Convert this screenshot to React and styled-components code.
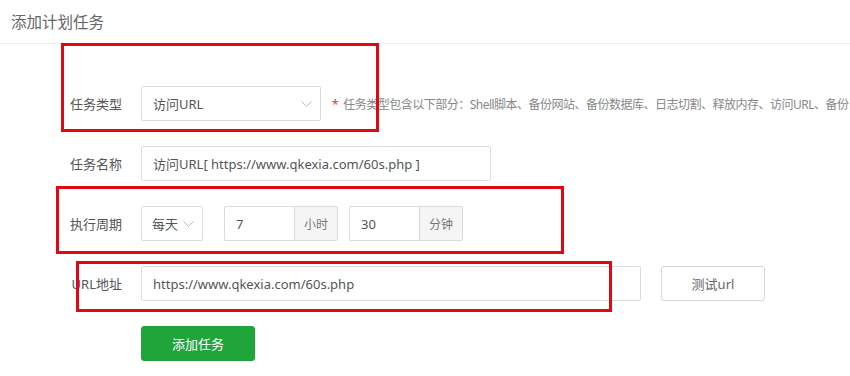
import React from "react";
import styled, { createGlobalStyle } from "styled-components";

const Global = createGlobalStyle`
  html, body { margin: 0; padding: 0; background: #fff; }
  body {
    width: 850px; height: 376px; overflow: hidden;
    font-family: "Noto Sans", "Noto Sans CJK SC", sans-serif;
    color: #555;
  }
`;

const Page = styled.div`
  position: relative;
  width: 850px;
  height: 376px;
  overflow: hidden;
`;

const TitleBar = styled.div`
  height: 43px;
  padding-left: 11px;
  display: flex;
  align-items: center;
  border-bottom: 1px solid #ececec;
  font-size: 15.5px;
  color: #666;
`;

const Form = styled.div`
  padding: 42px 0 0 0;
  display: flex;
  flex-direction: column;
  gap: 25px;
`;

const Row = styled.div`
  display: flex;
  align-items: center;
  height: 35px;
  white-space: nowrap;
`;

const Label = styled.div`
  width: 141px;
  padding-right: 19px;
  box-sizing: border-box;
  text-align: right;
  font-size: 13px;
  color: #555;
  flex-shrink: 0;
`;

const Box = styled.div`
  box-sizing: border-box;
  height: 35px;
  width: ${(p) => p.$w}px;
  border: 1px solid #dcdcdc;
  border-radius: 2px;
  display: flex;
  align-items: center;
  padding-left: ${(p) => p.$pl || 11}px;
  padding-right: 8px;
  font-size: 13px;
  color: #555;
  background: #fff;
  margin-left: ${(p) => p.$ml || 0}px;
  flex-shrink: 0;
`;

const BoxText = styled.span`
  flex: 1;
`;

const Group = styled.div`
  display: flex;
  height: 35px;
  margin-left: ${(p) => p.$ml || 0}px;
  flex-shrink: 0;
`;

const GroupInput = styled.div`
  box-sizing: border-box;
  width: 70px;
  height: 35px;
  border: 1px solid #dcdcdc;
  border-right: none;
  border-radius: 2px 0 0 2px;
  display: flex;
  align-items: center;
  padding-left: 11px;
  font-size: 13px;
  color: #555;
`;

const Addon = styled.div`
  box-sizing: border-box;
  width: 44px;
  height: 35px;
  border: 1px solid #dcdcdc;
  border-radius: 0 2px 2px 0;
  background: #f5f5f5;
  display: flex;
  align-items: center;
  justify-content: center;
  font-size: 12px;
  color: #777;
`;

const Hint = styled.div`
  margin-left: 11px;
  font-size: 12px;
  color: #888;
  white-space: nowrap;
  letter-spacing: -0.5px;
`;

const Star = styled.span`
  color: #e33;
  margin-right: 5px;
`;

const Button = styled.button`
  box-sizing: border-box;
  height: 35px;
  width: ${(p) => p.$w}px;
  margin-left: ${(p) => p.$ml || 0}px;
  border-radius: 3px;
  font-family: inherit;
  font-size: 13px;
  cursor: pointer;
  flex-shrink: 0;
  border: 1px solid ${(p) => (p.$primary ? "#20a53a" : "#d6d6d6")};
  background: ${(p) => (p.$primary ? "#20a53a" : "#fff")};
  color: ${(p) => (p.$primary ? "#fff" : "#666")};
`;

const Mark = styled.div`
  position: absolute;
  left: ${(p) => p.$x}px;
  top: ${(p) => p.$y}px;
  width: ${(p) => p.$w}px;
  height: ${(p) => p.$h}px;
  box-sizing: border-box;
  border: 3px solid #e30613;
  pointer-events: none;
`;

const Chevron = () => (
  <svg width="11" height="6" viewBox="0 0 11 6" fill="none">
    <path d="M0.5 0.5 L5.5 5.3 L10.5 0.5" stroke="#b8b8b8" strokeWidth="1" />
  </svg>
);

export default function App() {
  return (
    <Page>
      <Global />
      <TitleBar>添加计划任务</TitleBar>
      <Form>
        <Row>
          <Label>任务类型</Label>
          <Box $w={180}>
            <BoxText>访问URL</BoxText>
            <Chevron />
          </Box>
          <Hint>
            <Star>*</Star>
            任务类型包含以下部分：Shell脚本、备份网站、备份数据库、日志切割、释放内存、访问URL、备份目录
          </Hint>
        </Row>
        <Row>
          <Label>任务名称</Label>
          <Box $w={350}>访问URL[ https://www.qkexia.com/60s.php ]</Box>
        </Row>
        <Row>
          <Label>执行周期</Label>
          <Box $w={62} $pl={10}>
            <BoxText>每天</BoxText>
            <Chevron />
          </Box>
          <Group $ml={21}>
            <GroupInput>7</GroupInput>
            <Addon>小时</Addon>
          </Group>
          <Group $ml={11}>
            <GroupInput>30</GroupInput>
            <Addon>分钟</Addon>
          </Group>
        </Row>
        <Row>
          <Label>URL地址</Label>
          <Box $w={500}>https://www.qkexia.com/60s.php</Box>
          <Button $w={104} $ml={20}>测试url</Button>
        </Row>
        <Row>
          <Label />
          <Button $primary $w={114}>添加任务</Button>
        </Row>
      </Form>
      <Mark $x={61} $y={43} $w={318} $h={89} />
      <Mark $x={56} $y={186} $w={508} $h={68} />
      <Mark $x={76} $y={261} $w={536} $h={51} />
    </Page>
  );
}
